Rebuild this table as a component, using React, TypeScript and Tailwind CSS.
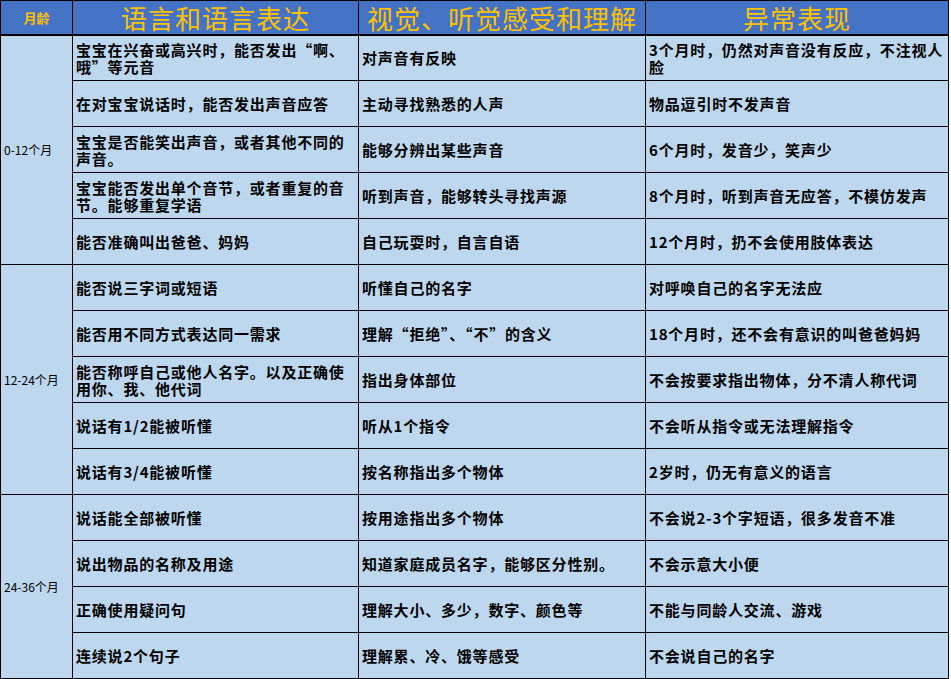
const FONT = { fontFamily: '"Noto Sans CJK SC", "Noto Sans", sans-serif' };

// [语言和语言表达, 视觉、听觉感受和理解, 异常表现]
const GROUPS: { age: string; rows: [string, string, string][] }[] = [
  {
    age: "0-12个月",
    rows: [
      ["宝宝在兴奋或高兴时，能否发出“啊、哦”等元音", "对声音有反映", "3个月时，仍然对声音没有反应，不注视人脸"],
      ["在对宝宝说话时，能否发出声音应答", "主动寻找熟悉的人声", "物品逗引时不发声音"],
      ["宝宝是否能笑出声音，或者其他不同的声音。", "能够分辨出某些声音", "6个月时，发音少，笑声少"],
      ["宝宝能否发出单个音节，或者重复的音节。能够重复学语", "听到声音，能够转头寻找声源", "8个月时，听到声音无应答，不模仿发声"],
      ["能否准确叫出爸爸、妈妈", "自己玩耍时，自言自语", "12个月时，扔不会使用肢体表达"],
    ],
  },
  {
    age: "12-24个月",
    rows: [
      ["能否说三字词或短语", "听懂自己的名字", "对呼唤自己的名字无法应"],
      ["能否用不同方式表达同一需求", "理解“拒绝”、“不”的含义", "18个月时，还不会有意识的叫爸爸妈妈"],
      ["能否称呼自己或他人名字。以及正确使用你、我、他代词", "指出身体部位", "不会按要求指出物体，分不清人称代词"],
      ["说话有1/2能被听懂", "听从1个指令", "不会听从指令或无法理解指令"],
      ["说话有3/4能被听懂", "按名称指出多个物体", "2岁时，仍无有意义的语言"],
    ],
  },
  {
    age: "24-36个月",
    rows: [
      ["说话能全部被听懂", "按用途指出多个物体", "不会说2-3个字短语，很多发音不准"],
      ["说出物品的名称及用途", "知道家庭成员名字，能够区分性别。", "不会示意大小便"],
      ["正确使用疑问句", "理解大小、多少，数字、颜色等", "不能与同龄人交流、游戏"],
      ["连续说2个句子", "理解累、冷、饿等感受", "不会说自己的名字"],
    ],
  },
];

export default function App() {
  return (
    <div className="w-[951px] h-[679px] bg-white overflow-hidden" style={FONT}>
      <table className="border-collapse table-fixed w-[949px] bg-[#bdd7ee] text-black">
        <colgroup>
          <col className="w-[72px]" />
          <col className="w-[286px]" />
          <col className="w-[287px]" />
          <col />
        </colgroup>
        <thead>
          <tr className="h-[34px] bg-[#4472c4] text-[#ffc000] border-b-2 border-black">
            <th className="border border-black p-0 text-[13px] font-bold">月龄</th>
            <th className="border border-black p-0 text-[26px] font-normal leading-[31px] tracking-[1px]">语言和语言表达</th>
            <th className="border border-black p-0 text-[26px] font-normal leading-[31px] tracking-[1px]">视觉、听觉感受和理解</th>
            <th className="border border-black p-0 text-[26px] font-normal leading-[31px] tracking-[1px]">异常表现</th>
          </tr>
        </thead>
        <tbody>
          {GROUPS.map((g) =>
            g.rows.map((r, i) => (
              <tr key={g.age + i} className="h-[46px]">
                {i === 0 && (
                  <td rowSpan={g.rows.length} className="border border-black text-[12px] text-left pl-[3px] align-middle">
                    {g.age}
                  </td>
                )}
                {r.map((t, j) => (
                  <td key={j} className="border border-black px-[3px] text-[15px] font-bold leading-[17px] tracking-[0.8px] align-middle">
                    {t}
                  </td>
                ))}
              </tr>
            ))
          )}
        </tbody>
      </table>
    </div>
  );
}
